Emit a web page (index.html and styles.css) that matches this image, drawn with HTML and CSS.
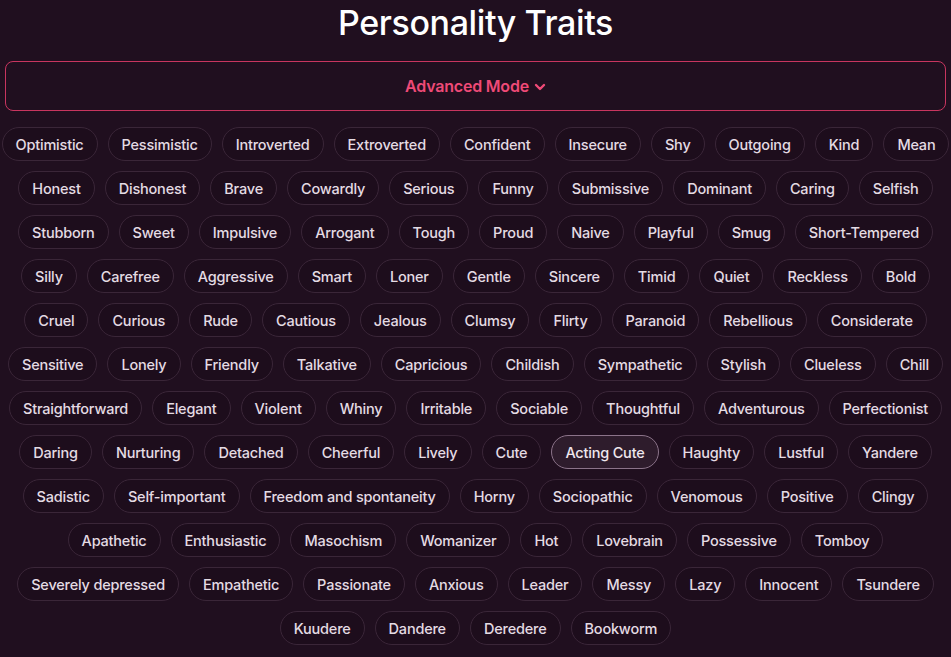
FILE: index.html
```html
<!DOCTYPE html>
<html lang="en">
<head>
    <meta charset="UTF-8">
    <title>Personality Traits</title>
    <link rel="stylesheet" href="styles.css">
</head>
<body>
    <main class="traits-page">
        <h1 class="page-title">Personality Traits</h1>
        <button class="mode-toggle">Advanced Mode
            <svg class="chevron" width="12" height="12" viewBox="0 0 12 12"><path d="M2 4l4 4 4-4" fill="none" stroke="currentColor" stroke-width="2.4" stroke-linecap="round" stroke-linejoin="round"/></svg>
        </button>
        <div class="trait-list">
            <div class="trait-row"><span class="trait">Optimistic</span><span class="trait">Pessimistic</span><span class="trait">Introverted</span><span class="trait">Extroverted</span><span class="trait">Confident</span><span class="trait">Insecure</span><span class="trait">Shy</span><span class="trait">Outgoing</span><span class="trait">Kind</span><span class="trait">Mean</span></div>
            <div class="trait-row"><span class="trait">Honest</span><span class="trait">Dishonest</span><span class="trait">Brave</span><span class="trait">Cowardly</span><span class="trait">Serious</span><span class="trait">Funny</span><span class="trait">Submissive</span><span class="trait">Dominant</span><span class="trait">Caring</span><span class="trait">Selfish</span></div>
            <div class="trait-row"><span class="trait">Stubborn</span><span class="trait">Sweet</span><span class="trait">Impulsive</span><span class="trait">Arrogant</span><span class="trait">Tough</span><span class="trait">Proud</span><span class="trait">Naive</span><span class="trait">Playful</span><span class="trait">Smug</span><span class="trait">Short-Tempered</span></div>
            <div class="trait-row"><span class="trait">Silly</span><span class="trait">Carefree</span><span class="trait">Aggressive</span><span class="trait">Smart</span><span class="trait">Loner</span><span class="trait">Gentle</span><span class="trait">Sincere</span><span class="trait">Timid</span><span class="trait">Quiet</span><span class="trait">Reckless</span><span class="trait">Bold</span></div>
            <div class="trait-row"><span class="trait">Cruel</span><span class="trait">Curious</span><span class="trait">Rude</span><span class="trait">Cautious</span><span class="trait">Jealous</span><span class="trait">Clumsy</span><span class="trait">Flirty</span><span class="trait">Paranoid</span><span class="trait">Rebellious</span><span class="trait">Considerate</span></div>
            <div class="trait-row"><span class="trait">Sensitive</span><span class="trait">Lonely</span><span class="trait">Friendly</span><span class="trait">Talkative</span><span class="trait">Capricious</span><span class="trait">Childish</span><span class="trait">Sympathetic</span><span class="trait">Stylish</span><span class="trait">Clueless</span><span class="trait">Chill</span></div>
            <div class="trait-row"><span class="trait">Straightforward</span><span class="trait">Elegant</span><span class="trait">Violent</span><span class="trait">Whiny</span><span class="trait">Irritable</span><span class="trait">Sociable</span><span class="trait">Thoughtful</span><span class="trait">Adventurous</span><span class="trait">Perfectionist</span></div>
            <div class="trait-row"><span class="trait">Daring</span><span class="trait">Nurturing</span><span class="trait">Detached</span><span class="trait">Cheerful</span><span class="trait">Lively</span><span class="trait">Cute</span><span class="trait selected">Acting Cute</span><span class="trait">Haughty</span><span class="trait">Lustful</span><span class="trait">Yandere</span></div>
            <div class="trait-row"><span class="trait">Sadistic</span><span class="trait">Self-important</span><span class="trait">Freedom and spontaneity</span><span class="trait">Horny</span><span class="trait">Sociopathic</span><span class="trait">Venomous</span><span class="trait">Positive</span><span class="trait">Clingy</span></div>
            <div class="trait-row"><span class="trait">Apathetic</span><span class="trait">Enthusiastic</span><span class="trait">Masochism</span><span class="trait">Womanizer</span><span class="trait">Hot</span><span class="trait">Lovebrain</span><span class="trait">Possessive</span><span class="trait">Tomboy</span></div>
            <div class="trait-row"><span class="trait">Severely depressed</span><span class="trait">Empathetic</span><span class="trait">Passionate</span><span class="trait">Anxious</span><span class="trait">Leader</span><span class="trait">Messy</span><span class="trait">Lazy</span><span class="trait">Innocent</span><span class="trait">Tsundere</span></div>
            <div class="trait-row"><span class="trait">Kuudere</span><span class="trait">Dandere</span><span class="trait">Deredere</span><span class="trait">Bookworm</span></div>
        </div>
    </main>
</body>
</html>
```

FILE: styles.css
```css
body { margin: 0; background-color: #200f1f; font-family: Inter, "Noto Sans", sans-serif; color: #e6dde5; }
.traits-page { padding: 0 5px; }
.page-title { margin: 0; padding-top: 2px; height: 59px; text-align: center; font-size: 34px; font-weight: 500; color: #ffffff; line-height: 42px; letter-spacing: -0.4px; }
.mode-toggle { display: flex; align-items: center; justify-content: center; gap: 5px; width: 100%; height: 50px; background: transparent; border: 1.5px solid #c8355f; border-radius: 8px; color: #ef4a77; font-family: inherit; font-size: 16px; font-weight: 600; letter-spacing: -0.2px; cursor: pointer; }
.mode-toggle .chevron { margin-top: 1px; }
.trait-list { display: flex; flex-direction: column; gap: 10px; margin-top: 16px; }
.trait-row { display: flex; justify-content: center; gap: 10px; }
.trait { display: inline-flex; align-items: center; height: 34px; box-sizing: border-box; padding: 0 13px; border: 1px solid #3a2638; border-radius: 17px; background-color: #1d0d1c; font-size: 14.5px; font-weight: 500; letter-spacing: -0.2px; color: #e4dbe3; white-space: nowrap; }
.trait.selected { border-color: #8b7389; background-color: #2e1c2c; color: #efe7ee; }
```
